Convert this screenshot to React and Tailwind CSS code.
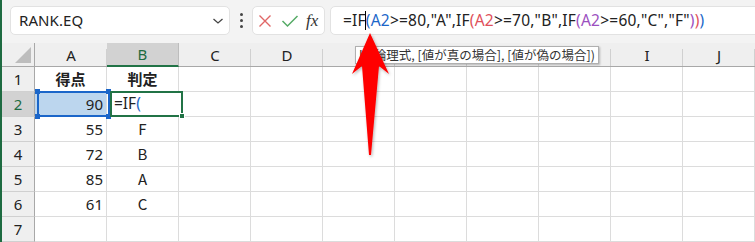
import React from "react";

const COLS = ["A", "B", "C", "D", "E", "F", "G", "H", "I", "J"];
const ROWS = [
  ["得点", "判定"],
  ["90", ""],
  ["55", "F"],
  ["72", "B"],
  ["85", "A"],
  ["61", "C"],
  ["", ""],
];

const cellFont = { fontFamily: '"Noto Sans CJK JP", "Noto Sans", sans-serif' };

function Formula() {
  const dark = "text-[#222]";
  const b = "text-[#1b66c9]";
  const r = "text-[#e0505a]";
  const p = "text-[#9b4fc0]";
  return (
    <span className="whitespace-nowrap tracking-[0.22px]">
      <span className={dark}>=IF</span>
      <span className="inline-block w-[1px] h-[19px] bg-black align-middle -mx-[0.5px] relative top-[-1px]"></span>
      <span className={b}>(A2</span>
      <span className={dark}>&gt;=80,"A",IF</span>
      <span className={r}>(</span>
      <span className={r}>A2</span>
      <span className={dark}>&gt;=70,"B",IF</span>
      <span className={p}>(A2</span>
      <span className={dark}>&gt;=60,"C","F"</span>
      <span className={p}>)</span>
      <span className={r}>)</span>
      <span className={b}>)</span>
    </span>
  );
}

export default function App() {
  return (
    <div
      className="relative w-[755px] h-[242px] overflow-hidden bg-[#f3f3f3] border-l-2 border-[#1e6b41]"
      style={{ fontFamily: '"Noto Sans", "Liberation Sans", sans-serif' }}
    >
      {/* formula bar */}
      <div className="flex items-start h-[43px] pt-[6px] pl-[8px]">
        <div className="flex items-center justify-between w-[220px] h-[29px] bg-white border border-[#e2e2e2] rounded-[5px] pl-[8px] pr-[5px]">
          <span className="text-[15px] text-[#222] tracking-[0.1px]">RANK.EQ</span>
          <svg width="12" height="8" viewBox="0 0 12 8">
            <path d="M1.5 2 L6 6 L10.5 2" fill="none" stroke="#444" strokeWidth="1.3" />
          </svg>
        </div>
        <div className="w-[22px] h-[29px] flex flex-col items-center justify-center gap-[3px]">
          <span className="w-[3px] h-[3px] rounded-full bg-[#444]"></span>
          <span className="w-[3px] h-[3px] rounded-full bg-[#444]"></span>
          <span className="w-[3px] h-[3px] rounded-full bg-[#444]"></span>
        </div>
        <div className="flex items-center w-[73px] h-[29px] bg-white border border-[#e2e2e2] rounded-[5px] pl-[5px]">
          <svg width="14" height="14" viewBox="0 0 14 14">
            <path d="M1.5 1.5 L12.5 12.5 M12.5 1.5 L1.5 12.5" stroke="#e06666" strokeWidth="1.4" />
          </svg>
          <svg width="18" height="14" viewBox="0 0 18 14" className="ml-[9px]">
            <path d="M1.5 7 L6.5 12 L16.5 2" fill="none" stroke="#55ab66" strokeWidth="1.5" />
          </svg>
          <span
            className="ml-[7px] text-[17px] italic text-[#333] leading-none"
            style={{ fontFamily: '"Liberation Serif", "DejaVu Serif", serif' }}
          >
            fx
          </span>
        </div>
        <div className="ml-[5px] flex-1 -mr-[20px] flex items-center h-[29px] bg-white border border-[#e2e2e2] rounded-[5px] pl-[12px] text-[15.5px]">
          <Formula />
        </div>
      </div>

      {/* sheet */}
      <div className="grid grid-cols-[33px_repeat(10,72px)] grid-rows-[24px_repeat(7,25px)]" style={cellFont}>
        {/* corner */}
        <div className="bg-[#efefef] border-r border-b border-[#a8a8a8] flex items-end justify-end pr-[2px] pb-[2px]">
          <svg width="18" height="18" viewBox="0 0 18 18">
            <path d="M17 1 L17 17 L1 17 Z" fill="#bdbdbd" />
          </svg>
        </div>
        {COLS.map((c) => (
          <div
            key={c}
            className={
              c === "B"
                ? "bg-[#d2d2d2] border-b-2 border-[#217346] text-[#1e6b41] flex items-center justify-center text-[15px] pt-[1px] border-r border-r-[#bdbdbd]"
                : "bg-[#efefef] border-b border-[#a8a8a8] text-[#222] flex items-center justify-center text-[15px] pt-[2px] relative"
            }
            style={{ fontFamily: '"Noto Sans", "Liberation Sans", sans-serif' }}
          >
            {c !== "B" && <span className="absolute right-0 top-[6px] bottom-0 w-px bg-[#d0d0d0]"></span>}
            {c}
          </div>
        ))}
        {ROWS.map((row, i) => (
          <React.Fragment key={i}>
            <div
              className={
                i === 1
                  ? "bg-[#d2d2d2] text-[#1e6b41] border-r border-b border-r-[#a8a8a8] border-b-[#d0d0d0] flex items-center justify-center text-[15px]"
                  : "bg-[#efefef] text-[#222] border-r border-b border-r-[#a8a8a8] border-b-[#d0d0d0] flex items-center justify-center text-[15px]"
              }
              style={{ fontFamily: '"Noto Sans", "Liberation Sans", sans-serif' }}
            >
              {i + 1}
            </div>
            {COLS.map((c, j) => {
              const v = j < 2 ? row[j] : "";
              let cls = "bg-white border-r border-b border-[#dcdcdc] flex items-center text-[15px] text-[#222]";
              if (i === 0) cls += " justify-center font-bold";
              else if (j === 0) cls += " justify-end pr-[3px]";
              else cls += " justify-center";
              if (i === 1 && j === 0) cls = "bg-[#bcd6ee] border-r border-b border-[#dcdcdc] flex items-center justify-end pr-[3px] text-[15px] text-[#222]";
              return (
                <div key={c} className={cls} style={j === 0 && i > 0 ? { fontFamily: '"Noto Sans", "Liberation Sans", sans-serif' } : undefined}>
                  {v}
                </div>
              );
            })}
          </React.Fragment>
        ))}
      </div>

      {/* A2 reference range */}
      <div className="absolute left-[35px] top-[91px] w-[73px] h-[26px] border-2 border-[#1b66c9] pointer-events-none"></div>
      <div className="absolute left-[33px] top-[89px] w-[5px] h-[5px] bg-[#1b66c9]"></div>
      <div className="absolute left-[104px] top-[89px] w-[5px] h-[5px] bg-[#1b66c9]"></div>
      <div className="absolute left-[33px] top-[114px] w-[5px] h-[5px] bg-[#1b66c9]"></div>
      <div className="absolute left-[104px] top-[114px] w-[5px] h-[5px] bg-[#1b66c9]"></div>

      {/* B2 active editing cell */}
      <div
        className="absolute left-[108px] top-[91px] w-[73px] h-[26px] border-2 border-[#217346] bg-white flex items-center pl-[2px] text-[15.5px]"
        style={{ fontFamily: '"Noto Sans", "Liberation Sans", sans-serif' }}
      >
        <span className="text-[#222]">=IF</span>
        <span className="text-[#1b66c9]">(</span>
      </div>
      <div className="absolute left-[177px] top-[113px] w-[6px] h-[6px] bg-[#217346] border border-white"></div>

      {/* tooltip */}
      <div
        className="absolute left-[353px] top-[46px] h-[18px] px-[3px] bg-white border border-[#b0b0b0] shadow-[1px_1px_2px_rgba(0,0,0,0.25)] flex items-center text-[12.5px] text-[#333] whitespace-nowrap"
        style={{ fontFamily: '"Noto Sans CJK JP", sans-serif' }}
      >
        IF(論理式, [値が真の場合], [値が偽の場合])
      </div>

      {/* red arrow */}
      <svg className="absolute left-0 top-0 pointer-events-none" width="755" height="242" viewBox="0 0 755 242">
        <defs>
          <filter id="sh" x="-50%" y="-20%" width="200%" height="140%">
            <feDropShadow dx="1" dy="1.5" stdDeviation="1.5" floodColor="#000" floodOpacity="0.3" />
          </filter>
        </defs>
        <path
          d="M368 33 L387 74 L377 66 L369 155 L367 155 L360 66 L350 74 Z"
          fill="#ff0000"
          filter="url(#sh)"
        />
      </svg>
    </div>
  );
}
